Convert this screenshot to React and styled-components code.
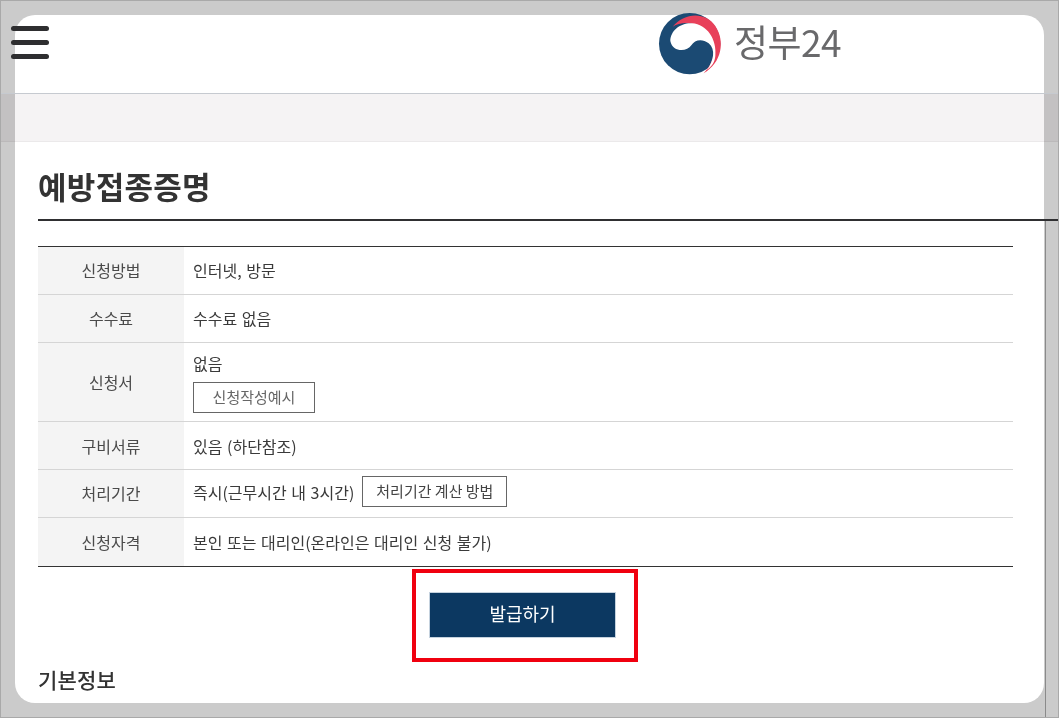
import React from "react";
import styled, { createGlobalStyle } from "styled-components";

const Global = createGlobalStyle`
  html, body { margin: 0; padding: 0; background: #cbcbcb; }
  * { box-sizing: border-box; }
`;

const Frame = styled.div`
  position: relative;
  width: 1059px;
  height: 718px;
  overflow: hidden;
  background: #cbcbcb;
  border: 1px solid #a9a9a9;
  font-family: "Noto Sans CJK KR", "Noto Sans", sans-serif;
  color: #333;
  &::before {
    content: "";
    position: absolute;
    left: 14px;
    top: 14px;
    width: 1029px;
    height: 688px;
    border-radius: 20px;
    background: #fff;
  }
`;

const Header = styled.header`
  position: relative;
  height: 93px;
  padding: 10px 0 0 10px;
  display: flex;
  border-bottom: 1px solid #c6cad0;
  margin-right: -1px;
`;

const Burger = styled.div`
  width: 38px;
  height: 33px;
  display: flex;
  flex-direction: column;
  justify-content: space-between;
  margin-top: 15px;
  span { display: block; height: 5px; border-radius: 3px; background: #2e2e30; }
`;

const Brand = styled.div`
  display: flex;
  align-items: center;
  margin-left: 603px;
  height: 72px;
  margin-top: -5px;
`;

const BrandName = styled.span`
  font-family: "Noto Sans CJK KR", sans-serif;
  font-size: 37px;
  font-weight: 400;
  letter-spacing: -0.5px;
  color: #69696b;
  margin-left: 6px;
  line-height: 60px;
  margin-top: -2px;
`;

const Band = styled.div`
  height: 48px;
  background: #f5f3f4;
  border-bottom: 1px solid #ebe9ea;
  mix-blend-mode: multiply;
  position: relative;
`;

const Title = styled.h1`
  position: relative;
  margin: 0 0 0 37px;
  height: 79px;
  padding-top: 22px;
  font-size: 31px;
  line-height: 44px;
  font-weight: 700;
  letter-spacing: 0.3px;
  color: #333;
  border-bottom: 2px solid #2f2f31;
`;

const Body = styled.div`
  position: relative;
  margin-left: 37px;
  padding-top: 25px;
  &::after {
    content: "";
    position: absolute;
    left: 1007px;
    top: 0;
    width: 1px;
    height: 496px;
    background: #8a8a8a;
  }
`;

const Table = styled.div`
  width: 975px;
  border-top: 1px solid #333;
  border-bottom: 1px solid #333;
`;

const Row = styled.div`
  display: grid;
  grid-template-columns: 146px 1fr;
  height: ${(p) => p.$h}px;
  & + & { border-top: 1px solid #d5d5d5; }
`;

const Label = styled.div`
  background: #f4f4f4;
  display: flex;
  align-items: center;
  justify-content: center;
  padding-bottom: ${(p) => p.$lift || 0}px;
  font-size: 16px;
  color: #4a4a4a;
`;

const Value = styled.div`
  display: flex;
  align-items: center;
  gap: 8px;
  padding: 0 0 ${(p) => p.$lift || 0}px 9px;
  font-size: 16px;
  word-spacing: 1px;
  color: #3a3a3a;
`;

const StackValue = styled.div`
  display: flex;
  flex-direction: column;
  align-items: flex-start;
  gap: 8px;
  padding: 9px 0 0 9px;
  font-size: 16px;
  line-height: 22px;
  color: #3a3a3a;
`;

const Outline = styled.span`
  display: inline-flex;
  align-items: center;
  justify-content: center;
  width: ${(p) => p.$w}px;
  height: 31px;
  padding-bottom: 2px;
  border: 1px solid #666;
  font-size: 15px;
  word-spacing: 0;
  color: ${(p) => p.$c || "#666"};
  background: #fff;
`;

const Highlight = styled.div`
  width: 226px;
  height: 93px;
  margin: 2px 0 0 374px;
  border: 4px solid #f0000f;
  display: flex;
  align-items: center;
  justify-content: center;
  padding: 0 5px 2px 0;
`;

const Issue = styled.div`
  width: 187px;
  height: 46px;
  padding-bottom: 3px;
  background: #0c3861;
  border: 1px solid #c5d2de;
  color: #fff;
  display: flex;
  align-items: center;
  justify-content: center;
  font-size: 18px;
`;

const Section = styled.h2`
  margin: 1px 0 0;
  font-size: 21px;
  line-height: 32px;
  font-weight: 500;
  letter-spacing: 0.2px;
  color: #333;
`;

const Logo = () => (
  <svg width="76" height="72" viewBox="0 0 228 216" aria-hidden="true">
    <circle cx="113" cy="113" r="92" fill="#1b4a73" />
    <path d="M62 62 C95 20 160 15 190 60 C220 105 210 170 155 202 C185 170 195 130 178 95 C155 50 95 40 62 62Z" fill="#e8405a" />
    <path d="M55 105 C55 75 85 50 120 52 C165 55 195 100 190 150 C188 170 180 180 165 192 C185 165 192 130 170 112 C150 97 128 102 118 118 C105 138 62 140 55 105Z" fill="#fff" />
  </svg>
);

const rows = [
  { h: 47, label: "신청방법", value: "인터넷, 방문" },
  { h: 48, label: "수수료", value: "수수료 없음" },
];

export default function App() {
  return (
    <>
      <Global />
      <Frame>
        <Header>
          <Burger><span /><span /><span /></Burger>
          <Brand>
            <Logo />
            <BrandName>정부24</BrandName>
          </Brand>
        </Header>
        <Band />
        <Title>예방접종증명</Title>
        <Body>
          <Table>
            {rows.map((r) => (
              <Row key={r.label} $h={r.h}>
                <Label $lift={2}>{r.label}</Label>
                <Value $lift={2}>{r.value}</Value>
              </Row>
            ))}
            <Row $h={79}>
              <Label>신청서</Label>
              <StackValue>
                <span>없음</span>
                <Outline $w={122}>신청작성예시</Outline>
              </StackValue>
            </Row>
            <Row $h={48}>
              <Label>구비서류</Label>
              <Value>있음 (하단참조)</Value>
            </Row>
            <Row $h={48}>
              <Label $lift={2}>처리기간</Label>
              <Value $lift={4}>
                <span>즉시(근무시간 내 3시간)</span>
                <Outline $w={145} $c="#444">처리기간 계산 방법</Outline>
              </Value>
            </Row>
            <Row $h={49}>
              <Label>신청자격</Label>
              <Value>본인 또는 대리인(온라인은 대리인 신청 불가)</Value>
            </Row>
          </Table>
          <Highlight>
            <Issue>발급하기</Issue>
          </Highlight>
          <Section>기본정보</Section>
        </Body>
      </Frame>
    </>
  );
}
